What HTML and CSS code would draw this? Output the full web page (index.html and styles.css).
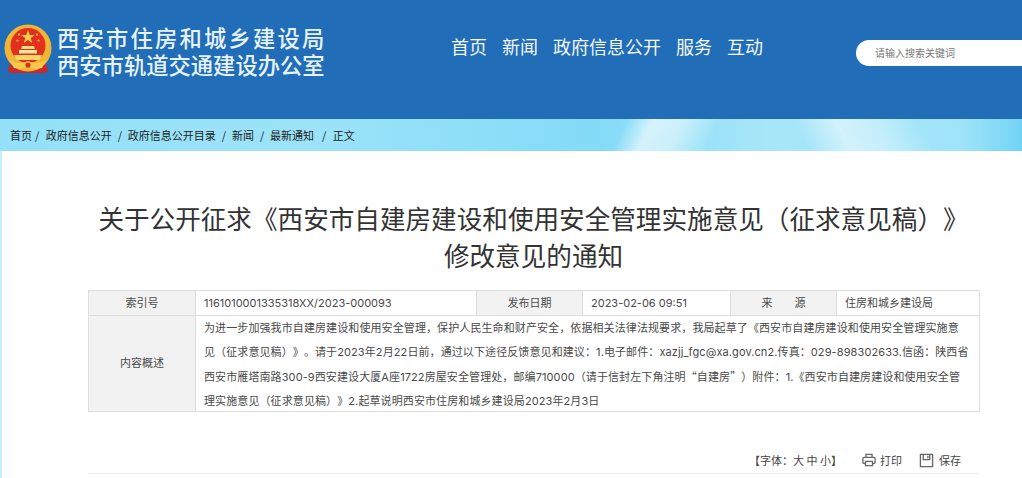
FILE: index.html
```html
<!DOCTYPE html>
<html lang="zh-CN">

<head>
    <meta charset="UTF-8">
    <meta name="viewport" content="width=device-width, initial-scale=1.0">
    <title>关于公开征求《西安市自建房建设和使用安全管理实施意见（征求意见稿）》修改意见的通知</title>
    <link rel="stylesheet" href="styles.css">
</head>

<body>
    <header class="top">
        <div class="brand">
            <svg class="emblem" viewBox="0 0 48 50" width="48" height="50">
                <path d="M8 36 H40 L44 45 Q44 49 40 49 L8 49 Q4 49 4 45 Z" fill="#c9282c"/>
                <circle cx="24" cy="24" r="23.5" fill="#f0b535"/>
                <circle cx="24" cy="21.5" r="17.5" fill="#e2301f"/>
                <path d="M24 6 L25.7 10.9 L30.8 10.9 L26.7 14 L28.2 18.9 L24 16 L19.8 18.9 L21.3 14 L17.2 10.9 L22.3 10.9 Z" fill="#f9cf45"/>
                <circle cx="15" cy="10.5" r="1.1" fill="#f9cf45"/>
                <circle cx="33" cy="10.5" r="1.1" fill="#f9cf45"/>
                <circle cx="13.5" cy="16.5" r="1" fill="#f9cf45"/>
                <circle cx="34.5" cy="16.5" r="1" fill="#f9cf45"/>
                <path d="M18 22 H30 L31 25 H17 Z" fill="#f9dc7c"/>
                <path d="M15 26 H33 V29.5 H15 Z" fill="#fbe6a0"/>
                <path d="M10 31 H38 L35.5 36 H12.5 Z" fill="#f9d568"/>
                <path d="M5 35 Q14 42 24 37 Q34 42 43 35 L38 44 Q30 46 24 42 Q18 46 10 44 Z" fill="#f6c94c"/>
                <circle cx="24" cy="41" r="2.6" fill="#d8301f"/>
            </svg>
            <div class="brand-names">
                <div class="name-wide">西安市住房和城乡建设局</div>
                <div>西安市轨道交通建设办公室</div>
            </div>
        </div>
        <nav class="main-nav">
            <a>首页</a>
            <a>新闻</a>
            <a>政府信息公开</a>
            <a>服务</a>
            <a>互动</a>
        </nav>
        <div class="search">请输入搜索关键词</div>
    </header>

    <div class="crumbs">
        <a>首页</a><span class="sep">/</span>
        <a>政府信息公开</a><span class="sep wide">/</span>
        <a>政府信息公开目录</a><span class="sep wide">/</span>
        <a>新闻</a><span class="sep wide">/</span>
        <a>最新通知</a><span class="sep wide last">/</span>
        <a>正文</a>
    </div>

    <main class="content">
        <h1>关于公开征求《西安市自建房建设和使用安全管理实施意见（征求意见稿）》<br>修改意见的通知</h1>

        <div class="info">
            <div class="cell label">索引号</div>
            <div class="cell">1161010001335318XX/2023-000093</div>
            <div class="cell label">发布日期</div>
            <div class="cell">2023-02-06 09:51</div>
            <div class="cell label">来　　源</div>
            <div class="cell">住房和城乡建设局</div>
            <div class="cell label">内容概述</div>
            <div class="cell summary">为进一步加强我市自建房建设和使用安全管理，保护人民生命和财产安全，依据相关法律法规要求，我局起草了《西安市自建房建设和使用安全管理实施意<br>见（征求意见稿）》。请于2023年2月22日前，通过以下途径反馈意见和建议：1.电子邮件：xazjj_fgc@xa.gov.cn2.传真：029-898302633.信函：陕西省<br>西安市雁塔南路300-9西安建设大厦A座1722房屋安全管理处，邮编710000（请于信封左下角注明<span class="cjk">“</span>自建房<span class="cjk">”</span>）附件：1.《西安市自建房建设和使用安全管<br>理实施意见（征求意见稿）》2.起草说明西安市住房和城乡建设局2023年2月3日</div>
        </div>

        <div class="tools">
            <span class="font-size">【字体：大 中 小】</span>
            <span class="tool print">
                <svg viewBox="0 0 16 16" width="14" height="14" fill="none" stroke="#666" stroke-width="1.5">
                    <path d="M4.5 5 V1.5 H11.5 V5"/>
                    <path d="M4 12 H2.5 Q1 12 1 10.5 V6.5 Q1 5 2.5 5 H13.5 Q15 5 15 6.5 V10.5 Q15 12 13.5 12 H12"/>
                    <path d="M4 9.5 H12 V14.5 H4 Z"/>
                </svg>
                打印
            </span>
            <span class="tool save">
                <svg viewBox="0 0 16 16" width="15" height="15" fill="none" stroke="#666" stroke-width="1.4">
                    <path d="M1.5 1.5 H14.5 V14.5 H1.5 Z"/>
                    <path d="M4.5 1.5 V7 H11.5 V1.5"/>
                    <path d="M9.5 3 V5.5"/>
                </svg>
                保存
            </span>
        </div>
    </main>
</body>

</html>
```

FILE: styles.css
```css
* {
    box-sizing: border-box;
    margin: 0;
    padding: 0;
}

body {
    font-family: "Noto Sans CJK SC", "Liberation Sans", sans-serif;
    height: 478px;
    overflow: hidden;
    background-color: #c4eefb;
    color: #333;
    text-spacing-trim: space-all;
}

.top {
    display: flex;
    align-items: flex-start;
    height: 119px;
    background-color: #226db8;
    padding-top: 24px;
    padding-left: 4px;
    overflow: hidden;
}

.brand {
    display: flex;
    flex: none;
    gap: 5px;
    width: 447px;
}

.brand-names {
    color: #e6f3fb;
    font-size: 22.3px;
    font-weight: 500;
    line-height: 27px;
    white-space: nowrap;
}

.name-wide {
    letter-spacing: 2.2px;
}

.main-nav {
    display: flex;
    flex: none;
    gap: 15px;
    width: 405px;
    margin-top: 8px;
    color: #f2f8fc;
    font-size: 18px;
    line-height: 28px;
}

.search {
    flex: none;
    width: 190px;
    height: 26px;
    margin-top: 16px;
    padding-left: 19px;
    border-radius: 13px;
    background-color: #fff;
    color: #777;
    font-size: 10px;
    line-height: 26px;
}

.crumbs {
    height: 32px;
    padding-left: 10px;
    background:
        linear-gradient(115deg, transparent 60.5%, rgba(255, 255, 255, 0.62) 63%, rgba(255, 255, 255, 0.5) 66%, transparent 69.5%),
        linear-gradient(65deg, transparent 78%, rgba(255, 255, 255, 0.5) 82%, rgba(255, 255, 255, 0.35) 86%, transparent 90%),
        linear-gradient(90deg, #93e0f8 0%, #9ce3f9 30%, #84dbf7 58%, #a8e6f9 75%, #a0e4f9 94%, #72d3f5 100%);
    color: #222;
    font-size: 11px;
    line-height: 32px;
}

.sep {
    margin: 0 4px 0 3px;
}

.sep.wide {
    margin-left: 6px;
    margin-right: 3.3px;
}

.sep.last {
    margin-left: 8px;
    margin-right: 4px;
}

.content {
    height: 327px;
    padding: 48px 43px 0 86px;
    margin-left: 2px;
    background-color: #fff;
}

h1 {
    width: 891px;
    text-align: center;
    color: #333;
    font-size: 25.6px;
    font-weight: 400;
    line-height: 37px;
}

.info {
    display: grid;
    grid-template-columns: 107px 281px 106px 148px 106px 143px;
    grid-template-rows: 25px 96px;
    margin-top: 17px;
    width: 891px;
    border-top: 1px solid #ddd;
    border-left: 1px solid #ddd;
    font-family: "Inter", "Noto Sans CJK SC", sans-serif;
    font-size: 11px;
    color: #4a4a4a;
}

.cell {
    padding-left: 8px;
    border-right: 1px solid #ddd;
    border-bottom: 1px solid #ddd;
    line-height: 24px;
    white-space: nowrap;
}

.label {
    padding-left: 0;
    text-align: center;
    background-color: #f2f2f2;
}

.cell.label:nth-child(7) {
    line-height: 95px;
}

.summary {
    grid-column: span 5;
    letter-spacing: 0.1px;
}

.cjk {
    font-family: "Noto Sans CJK SC", sans-serif;
}

.tools {
    display: flex;
    align-items: flex-end;
    width: 891px;
    height: 62px;
    padding: 0 0 3px 661px;
    border-bottom: 1px solid #eee;
    font-size: 11px;
    line-height: 20px;
    color: #444;
}

.tool {
    display: flex;
    align-items: center;
    gap: 4px;
}

.print {
    margin-left: 20px;
}

.save {
    margin-left: 17px;
    gap: 5px;
}
```
